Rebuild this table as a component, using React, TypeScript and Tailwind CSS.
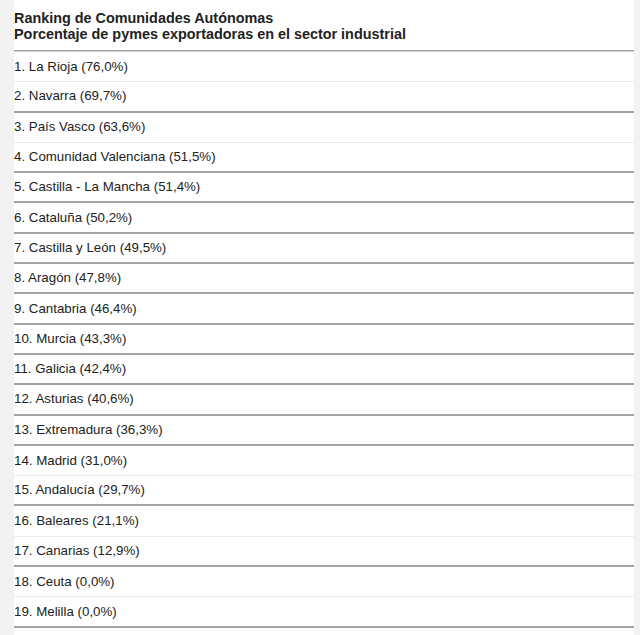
const rows: { name: string; pct: string; light?: boolean }[] = [
  { name: "La Rioja", pct: "76,0%", light: true },
  { name: "Navarra", pct: "69,7%" },
  { name: "País Vasco", pct: "63,6%", light: true },
  { name: "Comunidad Valenciana", pct: "51,5%" },
  { name: "Castilla - La Mancha", pct: "51,4%" },
  { name: "Cataluña", pct: "50,2%" },
  { name: "Castilla y León", pct: "49,5%" },
  { name: "Aragón", pct: "47,8%" },
  { name: "Cantabria", pct: "46,4%" },
  { name: "Murcia", pct: "43,3%" },
  { name: "Galicia", pct: "42,4%" },
  { name: "Asturias", pct: "40,6%" },
  { name: "Extremadura", pct: "36,3%" },
  { name: "Madrid", pct: "31,0%", light: true },
  { name: "Andalucía", pct: "29,7%" },
  { name: "Baleares", pct: "21,1%", light: true },
  { name: "Canarias", pct: "12,9%" },
  { name: "Ceuta", pct: "0,0%", light: true },
  { name: "Melilla", pct: "0,0%" },
]

export default function App() {
  return (
    <div className="flex h-[635px] w-[640px] bg-[#f2f2f2] font-['Liberation_Sans',Arial,sans-serif] text-[#222]">
      <div className="w-[14px] shrink-0" />
      <div className="flex w-[620px] flex-col bg-white">
        <div className="pt-[10px] pb-[8px] text-[14.4px] leading-[16px] font-bold">
          <div>Ranking de Comunidades Autónomas</div>
          <div>Porcentaje de pymes exportadoras en el sector industrial</div>
        </div>
        <div className="h-[2px] border-t border-[#a0a0a0] bg-[#d6d6d6]" />
        <ul>
          {rows.map((r, i) => (
            <li
              key={r.name}
              className={
                r.light
                  ? "flex h-[30.3px] items-center border-b border-[#ececec] text-[13.3px]"
                  : "flex h-[30.3px] items-center border-b-2 border-[#a4a4a4] text-[13.3px]"
              }
            >
              {i + 1}. {r.name} ({r.pct})
            </li>
          ))}
        </ul>
      </div>
    </div>
  )
}
